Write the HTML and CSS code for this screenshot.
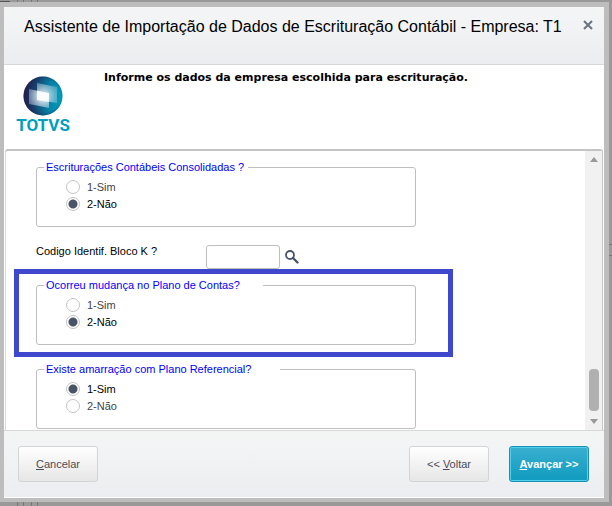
FILE: index.html
```html
<!DOCTYPE html>
<html lang="pt-BR">
<head>
  <meta charset="UTF-8">
  <meta name="viewport" content="width=device-width, initial-scale=1.0">
  <title>Assistente de Importação</title>
  <link rel="stylesheet" href="styles.css">
</head>
<body>

  <div class="dialog">
    <header>
      <h1>Assistente de Importação de Dados de Escrituração Contábil - Empresa: T1</h1>
      <button type="button" class="close" aria-label="Fechar">
        <svg width="10" height="10" viewBox="0 0 10 10">
          <path d="M1 1L9 9M9 1L1 9" stroke="#6b7280" stroke-width="2" fill="none"/>
        </svg>
      </button>
    </header>

    <!-- Intro -->
    <section class="intro">
      <svg class="logo" width="58" height="62" viewBox="0 0 58 62">
        <defs>
          <linearGradient id="ball" x1="0" y1="0.45" x2="1" y2="0.55">
            <stop offset="0" stop-color="#25204f"/>
            <stop offset="0.3" stop-color="#15426f"/>
            <stop offset="0.65" stop-color="#0580a4"/>
            <stop offset="1" stop-color="#00a3c0"/>
          </linearGradient>
          <radialGradient id="shade" cx="0.55" cy="0.5" r="0.55">
            <stop offset="0.7" stop-color="#1b1e4c" stop-opacity="0"/>
            <stop offset="1" stop-color="#1b1e4c" stop-opacity="0.5"/>
          </radialGradient>
          <radialGradient id="glow" gradientUnits="userSpaceOnUse" cx="29" cy="20" r="15">
            <stop offset="0" stop-color="#fff"/>
            <stop offset="0.4" stop-color="#fff" stop-opacity="0.85"/>
            <stop offset="1" stop-color="#b4cfe4" stop-opacity="0.5"/>
          </radialGradient>
        </defs>
        <circle cx="29" cy="20" r="19.5" fill="url(#ball)"/>
        <circle cx="29" cy="20" r="19.5" fill="url(#shade)"/>
        <path d="M23 7L43 11V27L23 24Z" fill="url(#glow)" fill-opacity="0.75"/>
        <path d="M15 13L35 17V32L15 28Z" fill="url(#glow)" fill-opacity="0.85"/>
        <path d="M23 15L35 17V26L23 24Z" fill="#fff" fill-opacity="0.6"/>
        <text class="logo-text" x="29" y="55" text-anchor="middle">TOTVS</text>
      </svg>
      <p>Informe os dados da empresa escolhida para escrituração.</p>
    </section>

    <!-- Questions -->
    <main>
      <form id="questions">
        <fieldset>
          <legend>Escriturações Contábeis Consolidadas ?</legend>
          <label><input type="radio" name="consolidadas"><span>1-Sim</span></label>
          <label><input type="radio" name="consolidadas" checked><span>2-Não</span></label>
        </fieldset>

        <div class="field">
          <label for="bloco">Codigo Identif. Bloco K ?</label>
          <input type="text" id="bloco">
          <button type="button" class="search" aria-label="Pesquisar">
            <svg width="14" height="14" viewBox="0 0 14 14">
              <circle cx="5" cy="5" r="4" fill="none" stroke="#4a5468" stroke-width="1.8"/>
              <path d="M8 8L12.5 12.5" stroke="#4a5468" stroke-width="2.4" stroke-linecap="round"/>
            </svg>
          </button>
        </div>

        <fieldset class="highlight">
          <legend class="medium">Ocorreu mudança no Plano de Contas?</legend>
          <label><input type="radio" name="plano"><span>1-Sim</span></label>
          <label><input type="radio" name="plano" checked><span>2-Não</span></label>
        </fieldset>

        <fieldset>
          <legend class="wide">Existe amarração com Plano Referencial?</legend>
          <label><input type="radio" name="referencial" checked><span>1-Sim</span></label>
          <label><input type="radio" name="referencial"><span>2-Não</span></label>
        </fieldset>
      </form>

      <div class="scrollbar">
        <div class="arrow up"></div>
        <div class="thumb"></div>
        <div class="arrow down"></div>
      </div>
    </main>

    <footer>
      <button type="button" class="cancel"><u>C</u>ancelar</button>
      <button type="button">&lt;&lt; <u>V</u>oltar</button>
      <button type="submit" form="questions" class="primary"><u>A</u>vançar &gt;&gt;</button>
    </footer>
  </div>

</body>
</html>
```

FILE: styles.css
```css
* {
  box-sizing: border-box;
}

body {
  display: flex;
  height: 100vh;
  margin: 0;
  padding: 2px 3px 4px 0;
  font-family: Arial, 'Liberation Sans', sans-serif;
  font-size: 11px;
  /* edges of the dimmed window behind the dialog */
  background:
    linear-gradient(#555, #555) 0 1px / 10px 1px no-repeat,
    linear-gradient(90deg, #777 1px, transparent 1px 6px, #777 6px 7px, transparent 7px 14px, #777 14px 15px, transparent 15px 20px, #777 20px) 17px 0 / 21px 100% no-repeat,
    linear-gradient(#777 1px, transparent 1px 11px, #777 11px) 100% 244px / 3px 12px no-repeat,
    #999;
}

.dialog {
  flex: 1;
  min-width: 0;
  display: flex;
  flex-direction: column;
  border: solid #bdbdbd;
  border-width: 5px 5px 4px 4px;
  background: #fff;
}

/* Title bar */
header {
  display: flex;
  justify-content: space-between;
  align-items: flex-start;
  height: 58px;
  padding: 10px 11px 0 20px;
  border-bottom: 1px solid #d6d7d8;
  background: linear-gradient(#f4f6f6, #ecedf0);
}

h1 {
  margin: 0;
  font-size: 16px;
  font-weight: normal;
  line-height: 20px;
  white-space: nowrap;
}

.close, .search {
  display: flex;
  padding: 0;
  border: none;
  background: none;
  cursor: pointer;
}

.close {
  padding-top: 3px;
}

/* Intro */
.intro {
  display: flex;
  gap: 32px;
  height: 84px;
  padding: 0 10px;
}

.intro p {
  margin: 6px 0 0;
  font-family: Verdana, 'DejaVu Sans', sans-serif;
  font-size: 11px;
  font-weight: bold;
  line-height: 14px;
}

.logo {
  flex: none;
  margin-top: 11px;
}

.logo-text {
  font-family: Roboto, sans-serif;
  font-size: 17px;
  font-weight: bold;
  fill: #009fbf;
}

/* Questions */
main {
  flex: 1;
  min-height: 0;
  display: flex;
  justify-content: space-between;
  margin: 0 1px;
  border: solid #c4c4c4;
  border-width: 2px 1px 0 0;
  border-radius: 3px 3px 0 0;
  overflow: hidden;
  box-shadow: inset 1px 0 #d8d8d8;
}

form {
  flex: 1;
  max-width: 411px;
  padding: 9px 0 0 31px;
}

fieldset {
  position: relative;
  margin: 0 0 17px;
  padding: 4px 29px 14px;
  border: 1px solid #bfbfbf;
  border-radius: 3px;
  min-width: 0;
}

legend {
  width: 204px;
  margin-left: -22px;
  padding: 0 2px;
  line-height: 14px;
  color: #00f;
  white-space: nowrap;
}

legend.medium {
  width: 219px;
}

legend.wide {
  width: 236px;
}

fieldset label {
  display: flex;
  align-items: center;
  gap: 7px;
  height: 17px;
}

input[type="radio"] {
  appearance: none;
  width: 14px;
  height: 14px;
  margin: 0;
  border: 1px solid #c4c4c4;
  border-radius: 50%;
  background: #fff;
}

input[type="radio"]:checked {
  background: radial-gradient(circle, #4a5468 4px, #fff 5px);
}

input[type="radio"] + span {
  color: #444;
}

input[type="radio"]:checked + span {
  color: #000;
}

/* Marker frame round the question */
.highlight::after {
  content: '';
  position: absolute;
  inset: -23px -38px -13px -23px;
  border: 5px solid #3f48cc;
  pointer-events: none;
}

.field {
  display: flex;
  align-items: flex-start;
  margin: 18px 0 9px;
}

.field label {
  width: 170px;
  line-height: 13px;
}

input[type="text"] {
  width: 74px;
  height: 24px;
  padding: 0 4px;
  border: 1px solid #bfbfbf;
  border-radius: 3px;
}

.search {
  padding: 5px;
}

/* Scrollbar */
.scrollbar {
  display: flex;
  flex-direction: column;
  align-items: center;
  width: 17px;
  padding: 6px 0;
  background: #f1f1f1;
}

.arrow {
  border: solid transparent;
  border-width: 0 4px;
}

.up {
  border-bottom: 5px solid #999;
}

.thumb {
  width: 10px;
  height: 42px;
  margin: auto 0 8px;
  border-radius: 4px;
  background: #b0b0b0;
}

.down {
  border-top: 5px solid #999;
}

/* Buttons */
footer {
  display: flex;
  gap: 20px;
  padding: 15px 15px 15px 14px;
  border-top: 1px solid #d6d7d8;
  border-bottom: 1px solid #fff;
  background: linear-gradient(#f4f6f6, #ecedf0);
}

footer button {
  width: 80px;
  height: 36px;
  padding: 0;
  border: 1px solid #d3d4d5;
  border-radius: 3px;
  font-family: inherit;
  font-size: 11px;
  color: #4a4d57;
  background: linear-gradient(#fff, #e6e6e6);
  cursor: pointer;
}

.cancel {
  margin-right: auto;
}

footer .primary {
  border-color: #1f8fb0;
  font-weight: bold;
  color: #fff;
  background: linear-gradient(#3aafd0, #0f9bbf);
  box-shadow: inset 0 0 0 1px #4fd0f0;
}
```
